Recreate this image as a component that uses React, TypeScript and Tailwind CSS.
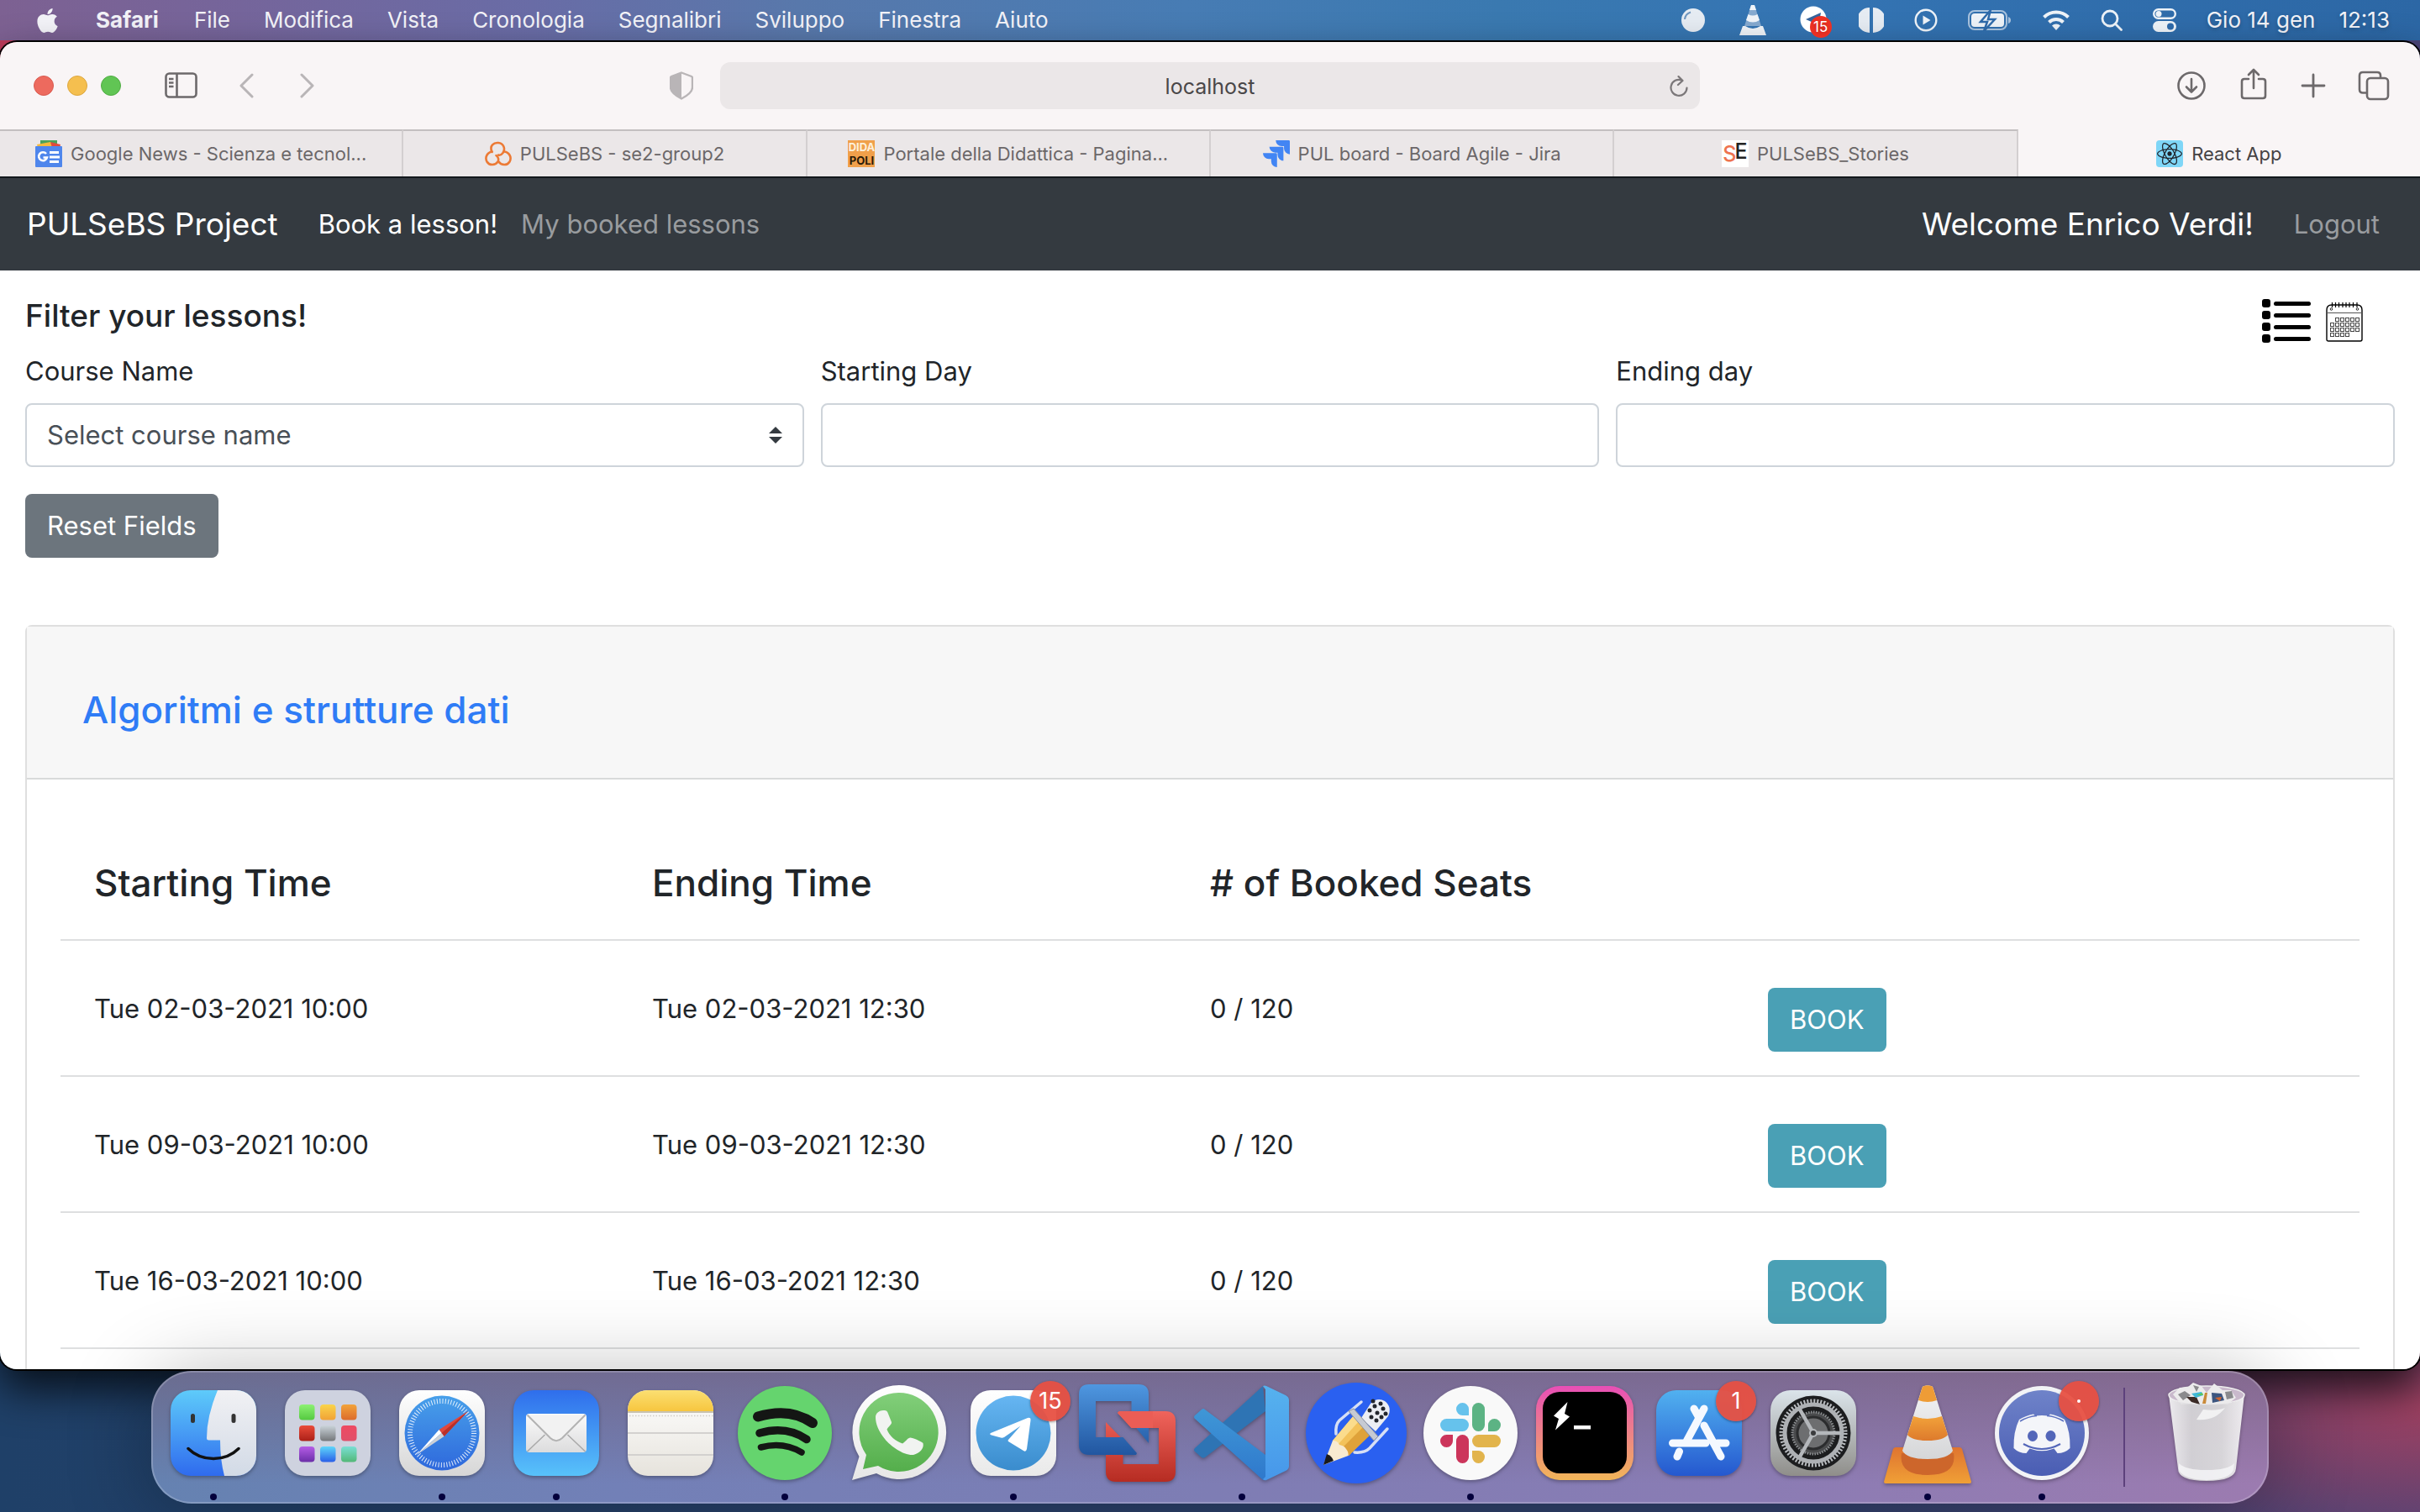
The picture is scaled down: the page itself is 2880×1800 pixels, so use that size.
import React from "react";
import { FaApple, FaReact } from "react-icons/fa";
import { SiJira } from "react-icons/si";

/* ---------- Menu bar ---------- */

const menus = ["File", "Modifica", "Vista", "Cronologia", "Segnalibri", "Sviluppo", "Finestra", "Aiuto"];

function BallGlyph() {
  return (
    <svg width="30" height="30" viewBox="0 0 30 30" aria-hidden="true">
      <circle cx="15" cy="15" r="14" fill="#e6ecf3" />
      <path d="M5 14A10 10 0 0 1 12 5.500" stroke="#6f97c0" strokeWidth="2" fill="none" />
    </svg>
  );
}

function ConeGlyph() {
  return (
    <svg width="32" height="38" viewBox="0 0 32 38" aria-hidden="true">
      <path d="M14 1h4l8 25H6z" fill="#86aad0" />
      <path d="M14 1h4l2 6h-8z" fill="#f0f4f9" />
      <path d="M10.500 12q5.500 3 11 0l2.500 7q-8 5-16 0z" fill="#f0f4f9" />
      <path d="M4 26h3q9 6 18 0h3l4 11H0z" fill="#f0f4f9" />
    </svg>
  );
}

function SendGlyph() {
  return (
    <span className="relative block">
      <svg width="34" height="34" viewBox="0 0 34 34" aria-hidden="true">
        <circle cx="16" cy="16" r="15.500" fill="#fff" />
        <path d="M7 16l18-8-3 17-6-5z" fill="#35639c" />
      </svg>
      <span className="absolute left-3 top-3 flex h-6.5 w-6.5 items-center justify-center rounded-full bg-[#ee3124] text-[17px] leading-6 text-white">
        15
      </span>
    </span>
  );
}

function HalvesGlyph() {
  return (
    <svg width="30" height="30" viewBox="0 0 30 30" aria-hidden="true">
      <path d="M13 0a15 15 0 0 0 0 30zM17 0a15 15 0 0 1 0 30z" fill="#e6ecf3" />
    </svg>
  );
}

function PlayGlyph() {
  return (
    <svg width="28" height="28" viewBox="0 0 28 28" aria-hidden="true">
      <circle cx="14" cy="14" r="12.300" fill="none" stroke="#eef3f8" strokeWidth="2.400" />
      <path d="M10.500 8.500l9 5.500-9 5.500z" fill="#eef3f8" />
    </svg>
  );
}

function BatteryGlyph() {
  return (
    <svg width="52" height="26" viewBox="0 0 52 26" aria-hidden="true">
      <rect x="1" y="2" width="45" height="22" rx="7" fill="none" stroke="#a9c3de" strokeWidth="2" />
      <rect x="4" y="5" width="39" height="16" rx="4" fill="#eef3f8" />
      <path d="M48 9q3 1 3 4t-3 4z" fill="#a9c3de" />
      <path d="M27 1L15 15h8l-4 11 13-14h-8z" fill="#eef3f8" stroke="#2f6bab" strokeWidth="2.500" />
    </svg>
  );
}

function WifiGlyph() {
  return (
    <svg width="34" height="26" viewBox="0 0 34 26" aria-hidden="true" fill="none" stroke="#eef3f8" strokeWidth="4">
      <path d="M2.500 9.500a20.500 20.500 0 0 1 29 0" />
      <path d="M8.500 15.500a12 12 0 0 1 17 0" />
      <path d="M17 25l-5-5.500a7 7 0 0 1 10 0z" fill="#eef3f8" stroke="none" />
    </svg>
  );
}

function SearchGlyph() {
  return (
    <svg width="26" height="26" viewBox="0 0 26 26" aria-hidden="true" fill="none" stroke="#eef3f8" strokeWidth="2.800">
      <circle cx="11" cy="11" r="9" />
      <path d="M17.500 17.500l7 7" strokeLinecap="round" />
    </svg>
  );
}

function SwitchesGlyph() {
  return (
    <svg width="28" height="28" viewBox="0 0 28 28" aria-hidden="true">
      <rect x="1.200" y="1.200" width="25.600" height="10.600" rx="5.300" fill="none" stroke="#eef3f8" strokeWidth="2.400" />
      <circle cx="7" cy="6.500" r="3.500" fill="#eef3f8" />
      <rect x="0" y="15" width="28" height="13" rx="6.500" fill="#eef3f8" />
      <circle cx="21" cy="21.500" r="4" fill="#2f6bab" />
    </svg>
  );
}

function MenuBar() {
  return (
    <header className="flex h-12 shrink-0 items-center justify-between bg-[linear-gradient(to_right,#7d6192_0%,#75659b_10%,#696ca6_22%,#5878ab_33%,#477cb4_49%,#3a79b0_62%,#3474b3_75%,#2c67a5_100%)] pl-10 pr-9 text-[26px] leading-8 text-[#f3f3f8] [text-shadow:0_2px_5px_rgba(0,0,0,0.25)]">
      <nav className="flex items-center gap-10.5">
        <button aria-label="Apple" className="w-8">
          <FaApple size={33} />
        </button>
        <button className="font-bold">Safari</button>
        <div className="flex items-center gap-10">
          {menus.map((m) => (
            <button key={m}>{m}</button>
          ))}
        </div>
      </nav>
      <div className="flex items-center gap-9">
        <div className="flex items-center gap-10">
          <BallGlyph />
          <ConeGlyph />
          <SendGlyph />
        </div>
        <HalvesGlyph />
        <PlayGlyph />
        <BatteryGlyph />
        <WifiGlyph />
        <SearchGlyph />
        <SwitchesGlyph />
        <span className="flex gap-7">
          <span>Gio 14 gen</span>
          <span>12:13</span>
        </span>
      </div>
    </header>
  );
}

/* ---------- Browser chrome ---------- */

function Toolbar() {
  return (
    <div className="grid h-26 shrink-0 grid-cols-[1fr_1166px_1fr] items-center bg-[#f9f5f6]">
      <div className="flex items-center justify-between pl-10 pr-8">
        <div className="flex items-center">
          <div className="flex gap-4">
            <button aria-label="Chiudi" className="h-6 w-6 rounded-full border border-[#d95a50] bg-[#ed6a5e]" />
            <button aria-label="Riduci" className="h-6 w-6 rounded-full border border-[#dda73f] bg-[#f5bf4f]" />
            <button aria-label="Ingrandisci" className="h-6 w-6 rounded-full border border-[#50ac43] bg-[#61c554]" />
          </div>
          <button aria-label="Barra laterale" className="ml-13">
            <svg width="40" height="32" viewBox="0 0 40 32" fill="none" stroke="#6d696b" strokeWidth="2.600">
              <rect x="1.500" y="1.500" width="36" height="28" rx="4" />
              <path d="M14.500 2v28M5 8h5.500M5 12.500h5.500M5 17h5.500" />
            </svg>
          </button>
          <button aria-label="Indietro" className="ml-12">
            <svg width="20" height="30" viewBox="0 0 20 30" fill="none" stroke="#b9b5b7" strokeWidth="3" strokeLinecap="round" strokeLinejoin="round">
              <path d="M16 2L3 15l13 13" />
            </svg>
          </button>
          <button aria-label="Avanti" className="ml-13">
            <svg width="20" height="30" viewBox="0 0 20 30" fill="none" stroke="#b9b5b7" strokeWidth="3" strokeLinecap="round" strokeLinejoin="round">
              <path d="M3 2l13 13L3 28" />
            </svg>
          </button>
        </div>
        <button aria-label="Privacy">
          <svg width="28" height="34" viewBox="0 0 28 34">
            <path d="M14 1.500l12 4.500q1 .5 1 2v11q0 7-13 13.500Q1 26 1 19V8q0-1.500 1-2z" fill="none" stroke="#b9b5b7" strokeWidth="2.400" />
            <path d="M14 1.500V32.500Q1 26 1 19V8q0-1.500 1-2z" fill="#b9b5b7" />
          </svg>
        </button>
      </div>
      <div className="relative">
        <input
          aria-label="Indirizzo"
          defaultValue="localhost"
          className="h-14 w-full rounded-xl bg-[#ebe7e8] pt-0.5 text-center text-[25px] text-[#4a4748] outline-none"
        />
        <button aria-label="Ricarica" className="absolute right-3.5 top-4">
          <svg width="22" height="26" viewBox="0 0 22 26" fill="none" stroke="#7b7779" strokeWidth="2.200" strokeLinecap="round" strokeLinejoin="round">
            <path d="M20.500 14.500a9.500 9.500 0 1 1-6-9M10.500 1l5 5-5.500 5" />
          </svg>
        </button>
      </div>
      <div className="flex items-center justify-end gap-9.5 pr-9 text-[#6d696b]">
        <button aria-label="Download">
          <svg width="36" height="36" viewBox="0 0 36 36" fill="none" stroke="currentColor" strokeWidth="2.600" strokeLinecap="round" strokeLinejoin="round">
            <circle cx="18" cy="18" r="15.500" />
            <path d="M18 10v15M12 19.500l6 6 6-6" />
          </svg>
        </button>
        <button aria-label="Condividi" className="pb-1">
          <svg width="36" height="38" viewBox="0 0 36 38" fill="none" stroke="currentColor" strokeWidth="2.600" strokeLinecap="round" strokeLinejoin="round">
            <path d="M12 13H7q-3 0-3 3v17q0 3 3 3h22q3 0 3-3V16q0-3-3-3h-5M18 24V2M12 8l6-6 6 6" />
          </svg>
        </button>
        <button aria-label="Nuovo pannello">
          <svg width="30" height="30" viewBox="0 0 30 30" fill="none" stroke="currentColor" strokeWidth="2.800" strokeLinecap="round">
            <path d="M15 2v26M2 15h26" />
          </svg>
        </button>
        <button aria-label="Panoramica pannelli">
          <svg width="38" height="36" viewBox="0 0 38 36" fill="none" stroke="currentColor" strokeWidth="2.600" strokeLinejoin="round">
            <rect x="11" y="9" width="25" height="25" rx="4" />
            <path d="M10 26.500H6q-4 0-4-4V6q0-4 4-4h17q4 0 4 4v2" />
          </svg>
        </button>
      </div>
    </div>
  );
}

function NewsIcon() {
  return (
    <svg width="32" height="32" viewBox="0 0 32 32" aria-hidden="true">
      <path d="M6 0h20v8H6z" fill="#4ca35a" />
      <path d="M18 2l12 3-1 4H16z" fill="#e04a3c" />
      <path d="M2 5l16-3 2 7H3z" fill="#f5b93c" />
      <rect y="7" width="32" height="25" rx="1" fill="#4f86ec" />
      <path d="M17 13h11v3H17zM17 18.500h12v3H17zM17 24h11v3H17z" fill="#fff" />
      <path d="M13 16a5 5 0 1 0 1 4.500h-4.500" fill="none" stroke="#fff" strokeWidth="2.600" />
    </svg>
  );
}

function RingsIcon() {
  return (
    <svg width="32" height="32" viewBox="0 0 32 32" fill="none" stroke="#ec7a35" strokeWidth="2.600" strokeLinecap="round" aria-hidden="true">
      <path d="M8.500 14C5 6 11 2.500 16 3c6 .5 9 7 5.500 12-1.500 2-4 3-5.500 2.500" />
      <path d="M8.500 13.500C2 15 0 21 2.500 25.500c3 5 10 4.500 13 0 1.500-3 0-6-2-7.500" />
      <path d="M23.500 13.500C30 15 32 21 29.500 25.500c-3 5-10 4.500-13 0" />
    </svg>
  );
}

function DidaIcon() {
  return (
    <span className="flex h-8 w-8 flex-col overflow-hidden bg-[#f0a04b] text-[13px] font-bold leading-4">
      <span className="text-[#fdf0dc]">DIDA</span>
      <span className="text-[#2a1a08]">POLI</span>
    </span>
  );
}

function SeIcon() {
  return (
    <span className="flex h-8 w-8 items-center justify-center bg-white text-[25px] leading-8">
      <span className="font-medium text-[#ee7350]">S</span>
      <span className="-ml-0.5 pb-1.5 font-medium text-[#222]">E</span>
    </span>
  );
}

const tabs: { title: string; icon: React.ReactNode }[] = [
  { title: "Google News - Scienza e tecnol...", icon: <NewsIcon /> },
  { title: "PULSeBS - se2-group2", icon: <RingsIcon /> },
  { title: "Portale della Didattica - Pagina...", icon: <DidaIcon /> },
  { title: "PUL board - Board Agile - Jira", icon: <SiJira size={32} color="#4285f4" /> },
  { title: "PULSeBS_Stories", icon: <SeIcon /> },
  {
    title: "React App",
    icon: (
      <span className="flex h-8 w-8 items-center justify-center rounded-sm bg-[#7fd6f7] text-[#20232a]">
        <FaReact size={30} />
      </span>
    ),
  },
];

function TabStrip() {
  return (
    <div role="tablist" className="flex h-14 shrink-0">
      {tabs.map((t, i) => {
        const active = i === tabs.length - 1;
        return (
          <button
            key={t.title}
            role="tab"
            aria-selected={active}
            className={
              "flex min-w-0 flex-1 items-center justify-center gap-2.5 whitespace-nowrap border-t-2 text-[22px] leading-8 " +
              (active
                ? "border-t-[#f9f5f6] bg-[#f9f5f6] text-[#454244]"
                : "border-r-2 border-r-[#d3cfd0] border-t-[#c3bfc0] bg-[#ebe7e8] text-[#6b6769]")
            }
          >
            {t.icon}
            <span>{t.title}</span>
          </button>
        );
      })}
    </div>
  );
}

/* ---------- Page ---------- */

function ListIcon() {
  return (
    <svg width="58" height="52" viewBox="0 0 58 52" aria-hidden="true">
      {[0, 14, 28, 42].map((y) => (
        <g key={y}>
          <rect x="0" y={y} width="10" height="10" rx="3" />
          <rect x="14" y={y + 3} width="44" height="5" rx="2.500" />
        </g>
      ))}
    </svg>
  );
}

const calendarDays = [
  [1, 2, 3, 4, 5],
  [0, 1, 2, 3, 4, 5],
  [0, 1, 2, 3, 4, 5],
  [0, 1, 2, 3],
];

function CalendarIcon() {
  return (
    <svg width="44" height="48" viewBox="0 0 44 48" fill="none" stroke="#000" aria-hidden="true">
      <path d="M1 44V9q0-6 6-6h30q6 0 6 6v35q0 2-2 2H3q-2 0-2-2z" strokeWidth="1.400" />
      <path d="M1 12.500h42" stroke="#555" strokeWidth="1.200" />
      <path d="M7.500 0v6M11.500 0v6M15.500 0v6M20 0v6M24 0v6M28 0v6M32.500 0v6M37 0v6" strokeWidth="1.200" />
      <circle cx="6.500" cy="8" r="1.300" strokeWidth=".8" />
      <circle cx="37.500" cy="8" r="1.300" strokeWidth=".8" />
      {calendarDays.map((row, r) =>
        row.map((c) => (
          <rect key={`${r}-${c}`} x={5.5 + c * 6} y={18.5 + r * 6} width="4" height="4" stroke="#444" strokeWidth="1" />
        ))
      )}
    </svg>
  );
}

const field = "h-19 w-full rounded-lg border-2 border-[#ced4da] bg-white px-6 text-[31px] text-[#495057] outline-none";

function Filters() {
  return (
    <form className="flex flex-col">
      <div className="flex h-14.5 items-end justify-between pr-9.5">
        <h2 className="self-start text-[37px] font-medium leading-13 text-[#212529]">Filter your lessons!</h2>
        <div className="flex items-end gap-4.5">
          <button type="button" aria-label="List view">
            <ListIcon />
          </button>
          <button type="button" aria-label="Calendar view">
            <CalendarIcon />
          </button>
        </div>
      </div>
      <div className="mt-2.5 grid grid-cols-3 gap-5 text-[31px] leading-12">
        <div className="flex flex-col gap-3.5">
          <label htmlFor="course">Course Name</label>
          <div className="relative">
            <select id="course" className={field + " appearance-none"}>
              <option>Select course name</option>
            </select>
            <svg className="pointer-events-none absolute right-6.5 top-7" width="16" height="20" viewBox="0 0 16 20" aria-hidden="true">
              <path d="M8 0l8 8H0zM8 20l8-8H0z" fill="#343a40" />
            </svg>
          </div>
        </div>
        <div className="flex flex-col gap-3.5">
          <label htmlFor="start">Starting Day</label>
          <input id="start" type="text" className={field} />
        </div>
        <div className="flex flex-col gap-3.5">
          <label htmlFor="end">Ending day</label>
          <input id="end" type="text" className={field} />
        </div>
      </div>
      <button type="reset" className="mt-8 h-19 self-start rounded-lg bg-[#6c757d] px-6.5 text-[31px] leading-12 text-white">
        Reset Fields
      </button>
    </form>
  );
}

const lessons = [
  { start: "Tue 02-03-2021 10:00", end: "Tue 02-03-2021 12:30", seats: "0 / 120" },
  { start: "Tue 09-03-2021 10:00", end: "Tue 09-03-2021 12:30", seats: "0 / 120" },
  { start: "Tue 16-03-2021 10:00", end: "Tue 16-03-2021 12:30", seats: "0 / 120" },
];

function CourseCard() {
  return (
    <section className="mt-20 flex flex-1 flex-col rounded-t-lg border-2 border-b-0 border-[#dfdfdf]">
      <div className="border-b-2 border-[#d8dada] bg-[#f7f7f7] pb-13 pl-16.5 pt-17.5">
        <h3 className="text-[44px] font-medium leading-[58px] text-[#2f7cf6]">
          <a href="#course">Algoritmi e strutture dati</a>
        </h3>
      </div>
      <div className="px-10">
        <table className="block w-full text-[#212529]">
          <thead className="block">
            <tr className="grid grid-cols-4 border-b-2 border-[#dedfe0] px-10 pb-9.5 pt-23.5 text-left text-[44px] leading-[58px]">
              <th className="font-medium">Starting Time</th>
              <th className="font-medium">Ending Time</th>
              <th className="font-medium"># of Booked Seats</th>
              <th aria-label="Actions" />
            </tr>
          </thead>
          <tbody className="block text-[31px] leading-[50px]">
            {lessons.map((l) => (
              <tr key={l.start} className="grid grid-cols-4 items-start border-b-2 border-[#dedfe0] px-10 pb-7 pt-14">
                <td>{l.start}</td>
                <td>{l.end}</td>
                <td>{l.seats}</td>
                <td className="flex">
                  <button className="h-19 rounded-lg bg-[#4aa0b5] px-6.5 text-white">BOOK</button>
                </td>
              </tr>
            ))}
          </tbody>
        </table>
      </div>
    </section>
  );
}

function Page() {
  return (
    <div className="flex min-h-0 flex-1 flex-col bg-white text-[#212529]">
      <nav className="flex h-28 shrink-0 items-center justify-between border-t-2 border-[#12181c] bg-[#343a40] px-8 text-[31px] leading-12">
        <div className="flex items-center">
          <a href="#home" className="text-[37px] text-white">PULSeBS Project</a>
          <a href="#book" className="ml-12 text-white">Book a lesson!</a>
          <a href="#booked" className="ml-7 text-[#999c9f]">My booked lessons</a>
        </div>
        <div className="flex items-center gap-12 pr-4">
          <span className="text-[37px] text-white">Welcome Enrico Verdi!</span>
          <a href="#logout" className="text-[#999c9f]">Logout</a>
        </div>
      </nav>
      <main className="flex min-h-0 flex-1 flex-col overflow-hidden px-7.5 pt-7">
        <Filters />
        <CourseCard />
      </main>
    </div>
  );
}

/* ---------- Dock icons, each drawn in a 120 x 120 box ---------- */

function Icon({ children }: { children: React.ReactNode }) {
  return (
    <svg width="120" height="120" viewBox="0 0 120 120" aria-hidden="true" className="overflow-visible drop-shadow-[0_2px_2px_rgba(0,0,0,0.3)]">
      {children}
    </svg>
  );
}

function Fade({ id, from, to }: { id: string; from: string; to: string }) {
  return (
    <linearGradient id={id} x1="0" y1="0" x2="0" y2="1">
      <stop offset="0" stopColor={from} />
      <stop offset="1" stopColor={to} />
    </linearGradient>
  );
}

function FinderIcon() {
  return (
    <Icon>
      <defs>
        <Fade id="fnA" from="#5ecbfa" to="#2f6bee" />
        <Fade id="fnB" from="#f1f1f4" to="#d2dae6" />
        <clipPath id="fnC"><rect x="9" y="9" width="102" height="102" rx="24" /></clipPath>
      </defs>
      <g clipPath="url(#fnC)">
        <rect x="9" y="9" width="102" height="102" fill="url(#fnA)" />
        <path d="M65 9Q52 40 52 66q0 2.500 2.500 2.500H68Q68 92 73 111H111V9z" fill="url(#fnB)" />
      </g>
      <path d="M35.500 39.500v6M84 39.500v6" stroke="#333" strokeWidth="5" strokeLinecap="round" />
      <path d="M30 78.500Q42 90.500 60 90.500T90 78.500" fill="none" stroke="#111" strokeWidth="3.500" strokeLinecap="round" />
    </Icon>
  );
}

const padColors = [
  ["#8df173", "#55c940"], ["#fad44b", "#f0a236"], ["#f2a33a", "#dc6b2c"],
  ["#ea4b39", "#ab2018"], ["#cbd4da", "#74777a"], ["#ee4a62", "#e0506a"],
  ["#b55de6", "#6b2ea8"], ["#5fd6fb", "#2a5fe8"], ["#7adfd4", "#53b878"],
];

function LaunchpadIcon() {
  return (
    <Icon>
      <rect x="9" y="9" width="102" height="102" rx="24" fill="#ced2df" />
      {padColors.map(([a, b], i) => (
        <g key={a}>
          <defs><Fade id={`lp${i}`} from={a} to={b} /></defs>
          <rect x={26 + (i % 3) * 25} y={26 + Math.floor(i / 3) * 25} width="18.500" height="18.500" rx="4" fill={`url(#lp${i})`} />
        </g>
      ))}
    </Icon>
  );
}

function SafariIcon() {
  return (
    <Icon>
      <defs>
        <Fade id="sfA" from="#ffffff" to="#d6d6d6" />
        <Fade id="sfB" from="#48a0ea" to="#2e68dc" />
      </defs>
      <rect x="9" y="9" width="102" height="102" rx="24" fill="url(#sfA)" />
      <circle cx="60" cy="60" r="44.500" fill="url(#sfB)" />
      <circle cx="60" cy="60" r="38" fill="none" stroke="#fff" strokeOpacity=".85" strokeWidth="6" strokeDasharray="1 2.320" />
      <path d="M91 34L62.500 64l-6-8z" fill="#e0483c" />
      <path d="M91 34L62.500 64l-3-4z" fill="#b8302a" />
      <path d="M30 86l26.500-30 3 4z" fill="#fff" />
      <path d="M30 86l29.500-26 3 4z" fill="#cdd1d6" />
    </Icon>
  );
}

function MailIcon() {
  return (
    <Icon>
      <defs>
        <Fade id="mlA" from="#2f6eec" to="#58c2fa" />
        <Fade id="mlB" from="#fbfbfb" to="#dcdcdd" />
      </defs>
      <rect x="9" y="9" width="102" height="102" rx="24" fill="url(#mlA)" />
      <rect x="24" y="37" width="72" height="46" rx="4" fill="url(#mlB)" />
      <path d="M25.500 82l21-20M94.500 82l-21-20" stroke="#a9a9a9" strokeWidth="1.500" />
      <path d="M25.500 38.500L53 66q7 6.500 14 0L94.500 38.500" fill="#f2f2f2" stroke="#b3b3b3" strokeWidth="2" />
    </Icon>
  );
}

function NotesIcon() {
  return (
    <Icon>
      <defs>
        <Fade id="ntA" from="#fbdf72" to="#f7c63f" />
        <Fade id="ntB" from="#ffffff" to="#e6e3dc" />
        <clipPath id="ntC"><rect x="9" y="9" width="102" height="102" rx="24" /></clipPath>
      </defs>
      <g clipPath="url(#ntC)">
        <rect x="9" y="9" width="102" height="102" fill="url(#ntB)" />
        <rect x="9" y="9" width="102" height="25" fill="url(#ntA)" />
        <path d="M9 35h102" stroke="#b9b09a" strokeWidth="1.500" />
        <path d="M11 39.500h100" stroke="#cfccc8" strokeWidth="1.500" strokeDasharray="1.500 2" />
        <path d="M9 60h102M9 86h102" stroke="#d3d1cf" strokeWidth="2" />
      </g>
    </Icon>
  );
}

function SpotifyIcon() {
  return (
    <Icon>
      <circle cx="60" cy="60" r="56" fill="#65d46e" />
      <g fill="none" stroke="#141614" strokeLinecap="round">
        <path d="M28 40.500Q66 29 93 48" strokeWidth="12" />
        <path d="M30 60Q62 51 86 67.500" strokeWidth="9.500" />
        <path d="M31.500 77Q58 70 80 83" strokeWidth="7.500" />
      </g>
    </Icon>
  );
}

function WhatsAppIcon() {
  return (
    <Icon>
      <defs>
        <Fade id="waA" from="#ffffff" to="#e6e6e6" />
        <Fade id="waB" from="#82cf7a" to="#54ae4b" />
      </defs>
      <path d="M60 3a56 56 0 1 1-27 105L4 116l8.500-28A56 56 0 0 1 60 3z" fill="url(#waA)" />
      <path d="M60 12a47 47 0 1 1-25 87L17 103l4-17A47 47 0 0 1 60 12z" fill="url(#waB)" />
      <path d="M32 41C32 36 37 33 41 33c4-.5 5 1 6 4l4 10c.7 2.500-4 5.500-5.500 8.500C48 63 56 70 64 72.500c3-1.500 6-6.500 9-7 2-.5 14 4.500 15.500 6.500C90 78 85 84 77 86 66 87 50 76 43 67 36 58 32 50 32 41z" fill="#f1f3f1" />
    </Icon>
  );
}

function TelegramIcon() {
  return (
    <Icon>
      <defs>
        <Fade id="tgA" from="#ffffff" to="#e9e9e9" />
        <Fade id="tgB" from="#66b6f2" to="#3a8ccd" />
      </defs>
      <rect x="9" y="9" width="102" height="102" rx="24" fill="url(#tgA)" />
      <circle cx="60" cy="60" r="44.500" fill="url(#tgB)" />
      <path d="M33 60L77 42q4-1 3.500 3L76 79q-1 4-4 2L54 70q-1-1 0-2l14.500-16.500L49 65q-2 1-4 .5l-11-3q-3-1-1-2.500z" fill="#fff" />
    </Icon>
  );
}

function VmwareIcon() {
  return (
    <Icon>
      <defs>
        <Fade id="vmA" from="#4f97e0" to="#2156a0" />
        <Fade id="vmB" from="#f0645c" to="#b62c22" />
      </defs>
      <path d="M50 34H105Q117 34 117 46V106Q117 118 105 118H46Q34 118 34 106V47L54.500 68V97H97V54H64.500L48 36z" fill="url(#vmB)" />
      <path d="M14 2H73Q85 2 85 14V72L64.500 47V22H22V65H54.500L71 84L70 86H14Q2 86 2 74V14Q2 2 14 2z" fill="url(#vmA)" />
      <path d="M50 34H90V54H64.500L48 36z" fill="#eb5d55" />
    </Icon>
  );
}

function CodeIcon() {
  return (
    <Icon>
      <defs>
        <Fade id="vsA" from="#56b2ee" to="#4797ea" />
        <Fade id="vsB" from="#3f97d6" to="#2f78cc" />
      </defs>
      <path d="M85 4L88 34 16 89q-2 1-4 0l-8-7q-2-2 0-4z" fill="#2e74b4" />
      <path d="M4 39l8-7q2-2 4 0L88 86V115q-2 2-4 0L4 43q-2-2 0-4z" fill="url(#vsB)" />
      <path d="M85 4q2-1 4 0l23 11q4 2 4 6V99q0 4-4 6L89 116q-2 1-4-1l3-3V8z" fill="url(#vsA)" />
    </Icon>
  );
}

const micHoles = [
  [76, 33], [82, 28], [89, 25], [78, 41], [85, 36], [92, 31], [84, 45], [90, 41], [80, 22], [95, 37],
];

function NotabilityIcon() {
  return (
    <Icon>
      <circle cx="60" cy="60" r="60" fill="#2a60f0" />
      <g fill="none" stroke="#d6dff5" strokeWidth="3.500" strokeLinecap="round">
        <path d="M66 23L40 45q-5 5-4 16" />
        <path d="M97 55L76 78q-6 6-18 5" />
      </g>
      <path d="M66 42L77 25q8-8 17-3 9 7 4 18L83 58z" fill="#eceef3" />
      {micHoles.map(([x, y]) => (
        <circle key={`${x}-${y}`} cx={x} cy={y} r="2.500" fill="#23262d" />
      ))}
      <path d="M32 69L58 38l18 23L51 87z" fill="#f3c25a" />
      <path d="M44 77L69 52l8 10L51 87z" fill="#dfa23a" />
      <path d="M32 69L58 38l6 7L38 74z" fill="#fbdc8c" />
      <path d="M32 69q6 0 8 5 6 1 8 5 3 3 2.500 8L21 98z" fill="#f8ead0" />
      <path d="M25 85q6 2 8 8l-12 5z" fill="#1a1a1c" />
      <path d="M51 34l6-3 29 33-5 5z" fill="#c6cad3" stroke="#8e929c" strokeWidth="1" />
    </Icon>
  );
}

function SlackIcon() {
  return (
    <Icon>
      <circle cx="60" cy="60" r="56" fill="#f9f9f9" />
      <g fill="#66c2ec">
        <path d="M58 39H50.500A7.500 7.500 0 1 1 58 31.500z" />
        <rect x="24" y="43" width="34" height="15" rx="7.500" />
      </g>
      <g fill="#5cb384">
        <rect x="62" y="24" width="15" height="34" rx="7.500" />
        <path d="M81 58V50.500A7.500 7.500 0 1 1 88.500 58z" />
      </g>
      <g fill="#cc355b">
        <rect x="43" y="62" width="15" height="34" rx="7.500" />
        <path d="M39 62V69.500A7.500 7.500 0 1 1 31.500 62z" />
      </g>
      <g fill="#e2b44c">
        <rect x="62" y="62" width="34" height="15" rx="7.500" />
        <path d="M62 81H69.500A7.500 7.500 0 1 1 62 88.500z" />
      </g>
    </Icon>
  );
}

function HyperIcon() {
  return (
    <Icon>
      <defs><Fade id="hyA" from="#e84fb6" to="#f2b558" /></defs>
      <rect x="2" y="4" width="116" height="112" rx="28" fill="url(#hyA)" />
      <rect x="10" y="11" width="100" height="97" rx="20" fill="#000" />
      <path d="M39.500 23L23 39.500l6 3.500-4 13.500L42 40.500 36 37z" fill="#fff" />
      <rect x="47" y="51" width="20" height="4.500" fill="#fff" />
    </Icon>
  );
}

function AppStoreIcon() {
  return (
    <Icon>
      <defs><Fade id="asA" from="#51b1f0" to="#2558cf" /></defs>
      <rect x="9" y="9" width="102" height="102" rx="24" fill="url(#asA)" />
      <g stroke="#f5f9ff" strokeWidth="9" strokeLinecap="round">
        <path d="M28.500 72H68M82 72h10M54 31l5 9M66 31L45 70M36.500 82L34 88M66 51L86 88" />
      </g>
    </Icon>
  );
}

function SettingsIcon() {
  return (
    <Icon>
      <defs><Fade id="stA" from="#dbe4ea" to="#8f8e8a" /></defs>
      <rect x="9" y="9" width="102" height="102" rx="24" fill="url(#stA)" />
      <circle cx="60" cy="60" r="44.500" fill="#1c1d1f" />
      <circle cx="60" cy="60" r="38" fill="none" stroke="#b9bcc0" strokeWidth="5" strokeDasharray="2 1.980" />
      <circle cx="60" cy="60" r="34" fill="none" stroke="#aeb1b5" strokeWidth="5" />
      <circle cx="60" cy="60" r="25" fill="#4a4b4d" stroke="#8b8e91" strokeWidth="3" strokeDasharray="1.500 1.500" />
      <circle cx="60" cy="60" r="19" fill="#6d6e70" stroke="#2b2c2e" strokeWidth="3" />
      <path d="M60 60h33M60 60L44 32M60 60L44 88" stroke="#b4b7bb" strokeWidth="4.500" />
      <circle cx="60" cy="60" r="4" fill="#3b3c3e" stroke="#b4b7bb" strokeWidth="2" />
    </Icon>
  );
}

function VlcIcon() {
  return (
    <Icon>
      <defs>
        <Fade id="vlA" from="#df7430" to="#f0a036" />
        <Fade id="vlB" from="#f2a23a" to="#dd7a2c" />
        <Fade id="vlC" from="#f4f4f5" to="#d5d6d8" />
      </defs>
      <path d="M22 77H98q2 0 3 2l11 39q0 2-2 2H10q-2 0-2-2L19 79q1-2 3-2z" fill="url(#vlA)" />
      <path d="M29 84q-4 26 31 26t31-26z" fill="#cd662b" />
      <path d="M56 4q4-1.500 8 0 2 0 2.500 2L90 81q-5 10-30 10T30 81L53.500 6Q54 4 56 4z" fill="url(#vlC)" />
      <path d="M56 4q4-1.500 8 0 2 0 2.500 2L71 21q-11 4-22 0L53.500 6Q54 4 56 4z" fill="#ee9c36" />
      <path d="M43 40q17 6 34 0l7 22q-5 7-24 7t-24-7z" fill="url(#vlB)" />
    </Icon>
  );
}

function DiscordIcon() {
  return (
    <Icon>
      <defs><Fade id="dcA" from="#6f83c9" to="#4a5db3" /></defs>
      <circle cx="60" cy="60" r="56" fill="#f2f3f6" />
      <circle cx="60" cy="60" r="51" fill="url(#dcA)" />
      <path d="M33 44q8-5 17-6.500l2 2q8-1 16 0l2-2Q79 39 87 44q7 14 6.500 34-6 6-15 6l-4-5.500Q60 84 45.500 78.500L41.500 84q-9 0-15-6Q26 58 33 44z" fill="#f4f5f9" />
      <path d="M34 46q10-6 20-6.500M86 46q-10-6-20-6.500" fill="none" stroke="#5c70c0" strokeWidth="1.500" />
      <path d="M38 73q22 12 44 0" fill="none" stroke="#5366b9" strokeWidth="2" />
      <ellipse cx="49" cy="63.500" rx="6" ry="6.500" fill="#5366b9" />
      <ellipse cx="70.500" cy="63.500" rx="6" ry="6.500" fill="#5366b9" />
    </Icon>
  );
}

function TrashIcon() {
  return (
    <Icon>
      <defs>
        <linearGradient id="trA" x1="0" x2="1" y1="0" y2="0">
          <stop offset="0" stopColor="#f3f2f4" />
          <stop offset=".3" stopColor="#d6d5d8" />
          <stop offset=".7" stopColor="#dcdbdd" />
          <stop offset="1" stopColor="#f4f3f5" />
        </linearGradient>
      </defs>
      <ellipse cx="60" cy="15" rx="45" ry="11" fill="#c9b9cc" stroke="#eee" strokeWidth="1.500" />
      <path d="M20 14l8-8 10-1 6-5 10 4 6 8 4-5 5-6 10 8 10 0 6 9-10 8H30z" fill="#ecebec" />
      <path d="M26 14l8-4 7 5-9 6zM44 3l7 2-3 6zM82 11l8-1 2 8-8 2z" fill="#8a8a8d" />
      <path d="M36 17l12 0 4 9-10-3z" fill="#3b2a26" />
      <path d="M42 13l12-2 2 4-9 3z" fill="#3fb7d8" />
      <path d="M48 15l7-3 1 3z" fill="#5cc75a" />
      <path d="M66 12l12 1 3 8-14 3z" fill="#3c557f" />
      <path d="M70 18l8-1-2 5z" fill="#d0662f" />
      <path d="M58 12l3 0-2 13-4 0z" fill="#c98a3a" />
      <path d="M15 14q3 12 45 12t45-12L95 102q-1 15-35 15T26 102z" fill="url(#trA)" fillOpacity=".95" />
      <path d="M48 44q22 2 34-14-10 4-26 2z" fill="#f1f1f2" />
      <path d="M27 96q8 8 33 8t33-8l-1 8q-6 12-32 12T27 104z" fill="#f6f6f7" fillOpacity=".8" />
    </Icon>
  );
}

const dockApps: { name: string; icon: React.ReactNode; running?: boolean; badge?: string }[] = [
  { name: "Finder", icon: <FinderIcon />, running: true },
  { name: "Launchpad", icon: <LaunchpadIcon /> },
  { name: "Safari", icon: <SafariIcon />, running: true },
  { name: "Mail", icon: <MailIcon />, running: true },
  { name: "Note", icon: <NotesIcon /> },
  { name: "Spotify", icon: <SpotifyIcon />, running: true },
  { name: "WhatsApp", icon: <WhatsAppIcon /> },
  { name: "Telegram", icon: <TelegramIcon />, running: true, badge: "15" },
  { name: "VMware Fusion", icon: <VmwareIcon /> },
  { name: "Visual Studio Code", icon: <CodeIcon />, running: true },
  { name: "Notability", icon: <NotabilityIcon /> },
  { name: "Slack", icon: <SlackIcon />, running: true },
  { name: "Hyper", icon: <HyperIcon /> },
  { name: "App Store", icon: <AppStoreIcon />, badge: "1" },
  { name: "Preferenze di Sistema", icon: <SettingsIcon /> },
  { name: "VLC", icon: <VlcIcon />, running: true },
  { name: "Discord", icon: <DiscordIcon />, running: true, badge: "•" },
];

function Dock() {
  return (
    <footer className="relative flex shrink-0 justify-center pb-2.5 pt-0.5">
      <div className="flex h-[158px] rounded-[48px] border-2 border-white/20 bg-[linear-gradient(to_bottom,rgba(112,90,115,0.55),rgba(112,90,115,0)_85%),linear-gradient(to_right,#6582b1_0%,#7280b7_22%,#7e7db4_50%,#8a7cb4_75%,#9c7bb0_100%)] bg-origin-border px-1 pt-3 shadow-[0_10px_100px_rgba(0,0,0,0.3)]">
        {dockApps.map((a) => (
          <button key={a.name} aria-label={a.name} className="relative flex w-[136px] flex-col items-center">
            {a.icon}
            {a.running && <span className="mt-3 h-2 w-2 rounded-full bg-[#04003c]" />}
            {a.badge && (
              <span className="absolute -top-0.5 right-0 flex h-12 w-12 items-center justify-center rounded-full bg-[#e75042]/95 text-[27px] leading-12 text-white shadow-[0_1px_3px_rgba(0,0,0,0.4)]">
                {a.badge === "•" ? <span className="h-1 w-1 rounded-full bg-white" /> : a.badge}
              </span>
            )}
          </button>
        ))}
        <span className="mx-[29px] mt-1.5 h-[118px] w-0.5 bg-[#5d417c]" />
        <button aria-label="Cestino" className="flex w-[136px] flex-col items-center">
          <TrashIcon />
        </button>
      </div>
    </footer>
  );
}

export default function App() {
  return (
    <div className="flex h-screen flex-col overflow-hidden bg-[radial-gradient(circle_at_0_0,#c03c5c_0%,#b8385a_17%,transparent_18%),radial-gradient(ellipse_18%_10%_at_101%_93%,#a04060_0%,transparent_100%),linear-gradient(to_right,#1f4068_0%,#2a426c_40%,#33426e_75%,#4a4478_100%)] font-[Inter,sans-serif]">
      <MenuBar />
      <div className="mt-0.5 flex min-h-0 flex-1 flex-col overflow-hidden rounded-[20px] shadow-[0_0_0_2px_#000,0_24px_50px_rgba(0,0,0,0.75)]">
        <Toolbar />
        <TabStrip />
        <Page />
      </div>
      <Dock />
    </div>
  );
}
